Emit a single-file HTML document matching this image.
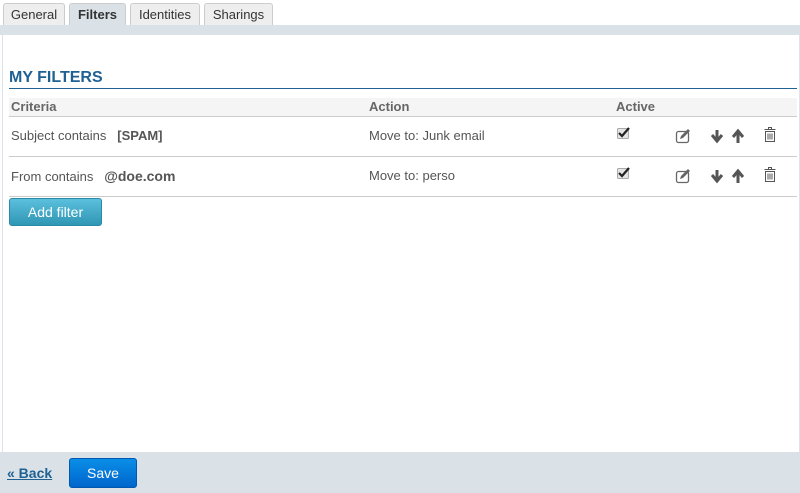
<!DOCTYPE html>
<html><head><style>
*{margin:0;padding:0;box-sizing:border-box}
body{width:800px;height:493px;background:#fff;font-family:"Liberation Sans",sans-serif;font-size:13px;color:#555;position:relative;overflow:hidden}
.tab{position:absolute;top:3px;height:23px;background:#eee;border:1px solid #ccc;border-bottom:none;border-radius:3px 3px 0 0;font-size:13px;color:#333;text-align:center;line-height:21px}
.bar{position:absolute;left:0;top:25px;width:800px;height:10px;background:#dae2e8}
.main{position:absolute;left:2px;top:35px;width:798px;height:417px;border-left:1px solid #dbe4ea;border-right:1px solid #dbe4ea}
.foot{position:absolute;left:0;top:452px;width:800px;height:41px;background:#dae2e8}
.abs{position:absolute}
.line{position:absolute;left:9px;width:788px;height:1px;background:#ccc}
</style></head><body>
<div class="tab" style="left:3px;width:62px">General</div>
<div class="tab" style="left:69px;width:57px;background:#dae2e8;font-weight:bold">Filters</div>
<div class="tab" style="left:130px;width:70px">Identities</div>
<div class="tab" style="left:204px;width:69px">Sharings</div>
<div class="bar"></div>
<div class="main"></div>
<div class="abs" style="left:9px;top:69px;font-size:16px;font-weight:bold;color:#1f6192">MY FILTERS</div>
<div class="abs" style="left:9px;top:88px;width:788px;height:1px;background:#1f6192"></div>
<div class="abs" style="left:9px;top:98px;width:788px;height:18px;background:#f5f5f5"></div>
<div class="abs" style="left:11px;top:99px;font-weight:bold;color:#666">Criteria</div>
<div class="abs" style="left:369px;top:99px;font-weight:bold;color:#666">Action</div>
<div class="abs" style="left:616px;top:99px;font-weight:bold;color:#666">Active</div>
<div class="line" style="top:116px"></div>
<div class="line" style="top:156px"></div>
<div class="line" style="top:196px"></div>
<div class="abs" style="left:11px;top:128px">Subject contains &nbsp;&nbsp;<b>[SPAM]</b></div>
<div class="abs" style="left:369px;top:128px">Move to: Junk email</div>
<div class="abs" style="left:11px;top:168px">From contains &nbsp;&nbsp;<b style="font-size:14px">@doe.com</b></div>
<div class="abs" style="left:369px;top:168px">Move to: perso</div>
<svg class="abs" style="left:615px;top:125px" width="170" height="60">
<g id="r">
<rect x="2.5" y="3.5" width="11" height="10" rx="1" fill="#e4e4e4" stroke="#aaa"/>
<path d="M4 8l3 3 7-8" stroke="#222" stroke-width="2.2" fill="none"/>
<rect x="61.5" y="6.5" width="12" height="11" rx="2" fill="none" stroke="#666" stroke-width="1.3"/>
<path d="M65 14l1-3 7-7 2 2-7 7z" fill="#666"/>
<path d="M102 5v10M97 10l5 6 5-6" stroke="#555" stroke-width="3" fill="none"/>
<path d="M123 18v-10M118 12l5-6 5 6" stroke="#555" stroke-width="3" fill="none"/>
<path d="M149.5 4.5h11M153.5 4.5v-2h3v2M150.5 6.5h9v10h-9z M153 8.5v6M155 8.5v6M157 8.5v6" stroke="#555" stroke-width="1" fill="none"/>
</g>
<use href="#r" y="40"/>
</svg>
<div class="abs" style="left:9px;top:198px;width:93px;height:28px;background:linear-gradient(#5bc0de,#2f96b4);border:1px solid #2a8aa6;border-radius:3px;color:#fff;font-size:14px;text-align:center;line-height:26px">Add filter</div>
<div class="foot"></div>
<div class="abs" style="left:7px;top:465px;font-size:14px;font-weight:bold;color:#1f6192;text-decoration:underline">« Back</div>
<div class="abs" style="left:69px;top:458px;width:68px;height:30px;background:linear-gradient(#0a8ee8,#0066cc);border:1px solid #0058b0;border-radius:3px;color:#fff;font-size:14px;text-align:center;line-height:28px">Save</div>
</body></html>
